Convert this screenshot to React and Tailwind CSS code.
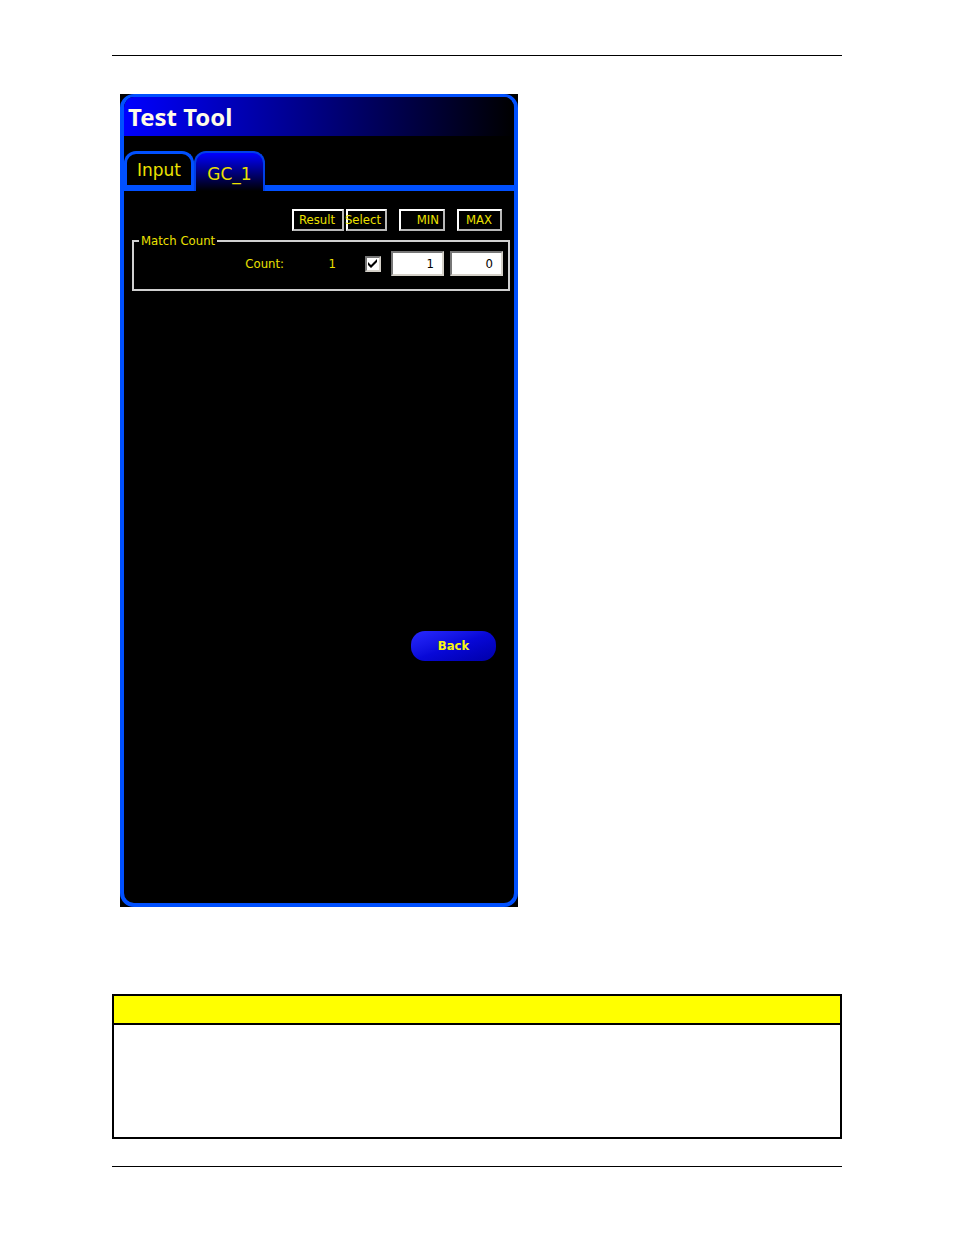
import React, { useState } from 'react';

const FONT = "font-['DejaVu_Sans_Condensed','DejaVu_Sans',sans-serif]";

const ColumnLabel = ({ children, className }) => (
    <div className={`flex h-[22px] items-center justify-end border-2 border-t-white border-l-white border-r-[#b8b8b8] border-b-[#b8b8b8] ${className}`}>
        {children}
    </div>
);

const LimitInput = ({ label, value, onChange }) => (
    <input
        type="text"
        aria-label={label}
        value={value}
        onChange={(e) => onChange(e.target.value)}
        className="h-[25px] w-[53px] border-2 border-t-[#777] border-l-[#777] border-r-[#d4d0c8] border-b-[#d4d0c8] bg-white pr-2 text-right text-black outline-none"
    />
);

const TestTool = () => {
    const [tab, setTab] = useState('GC_1');
    const [selected, setSelected] = useState(true);
    const [min, setMin] = useState('1');
    const [max, setMax] = useState('0');

    return (
        <div className="bg-black">
            <section className={`flex min-h-[813px] flex-col overflow-hidden rounded-[14px] border-4 border-t-[3px] border-[#0050ff] bg-black text-[13px] leading-4 text-[#ece100] ${FONT}`}>
                <h1 className="bg-linear-to-r/srgb from-[#0000ff] to-black pl-1 font-['Noto_Sans','Open_Sans',sans-serif] text-[24px] leading-[39px] font-bold text-[#fffbe8]">
                    Test Tool
                </h1>

                <div role="tablist" className="mt-[15px] flex h-10 border-b-6 border-[#0050ff] font-['DejaVu_Sans',sans-serif] text-[17px]">
                    <button
                        role="tab"
                        aria-selected={tab === 'Input'}
                        onClick={() => setTab('Input')}
                        className="h-[34px] w-[70px] rounded-t-[12px] border-3 border-b-0 border-[#0050ff] bg-black"
                    >
                        Input
                    </button>
                    <button
                        role="tab"
                        aria-selected={tab === 'GC_1'}
                        onClick={() => setTab('GC_1')}
                        className="h-10 w-[71px] rounded-t-[12px] border-2 border-b-0 border-[#0040e8] bg-linear-to-b/srgb from-[#0000ff] to-black pt-1"
                    >
                        GC_1
                    </button>
                </div>

                <div className="mt-[18px] flex justify-end pr-3">
                    <ColumnLabel className="w-[52px] pr-[7px]">Result</ColumnLabel>
                    <ColumnLabel className="ml-[2px] w-[41px] pr-1">Select</ColumnLabel>
                    <ColumnLabel className="ml-3 w-[46px] pr-1">MIN</ColumnLabel>
                    <ColumnLabel className="ml-3 w-[45px] pr-2">MAX</ColumnLabel>
                </div>

                <fieldset className="mt-[2px] mr-1 ml-2 h-[58px] border-2 border-[#d0d0d0]">
                    <legend className="ml-[5px] px-[2px]">Match Count</legend>
                    <div className="mt-[2px] flex items-center justify-end pr-[5px]">
                        <span>Count:</span>
                        <output className="w-[52px] text-right">1</output>
                        <label className="relative mr-[10px] ml-[29px] block size-4">
                            <input
                                type="checkbox"
                                aria-label="Select count"
                                checked={selected}
                                onChange={() => setSelected(!selected)}
                                className="block size-4 appearance-none border-2 border-t-[#777] border-l-[#777] border-r-[#d4d0c8] border-b-[#d4d0c8] bg-white"
                            />
                            {selected && (
                                <svg viewBox="0 0 16 16" className="pointer-events-none absolute inset-0 size-4">
                                    <path d="M3 6v3l3 3 6-6V3L6 9Z" fill="#000" />
                                </svg>
                            )}
                        </label>
                        <LimitInput label="Minimum" value={min} onChange={setMin} />
                        <div className="w-[6px]" />
                        <LimitInput label="Maximum" value={max} onChange={setMax} />
                    </div>
                </fieldset>

                <button className="mt-[340px] mr-[18px] h-[30px] w-[85px] self-end rounded-[14px] bg-linear-to-br from-[#2828ff] via-[#0808d8] to-[#0000a8] font-bold text-[#f8f810]">
                    Back
                </button>
            </section>
        </div>
    );
};

const App = () => (
    <main className="min-h-screen bg-white px-28 pt-[55px] pb-[68px]">
        <hr className="border-black" />
        <div className="mt-[38px] ml-2 w-[398px] max-w-full">
            <TestTool />
        </div>
        <div className="mt-[87px] border-2 border-black">
            <div className="h-[27px] bg-[#ffff00]" />
            <div className="h-[114px] border-t-2 border-black" />
        </div>
        <hr className="mt-[27px] border-black" />
    </main>
);

export default App;
